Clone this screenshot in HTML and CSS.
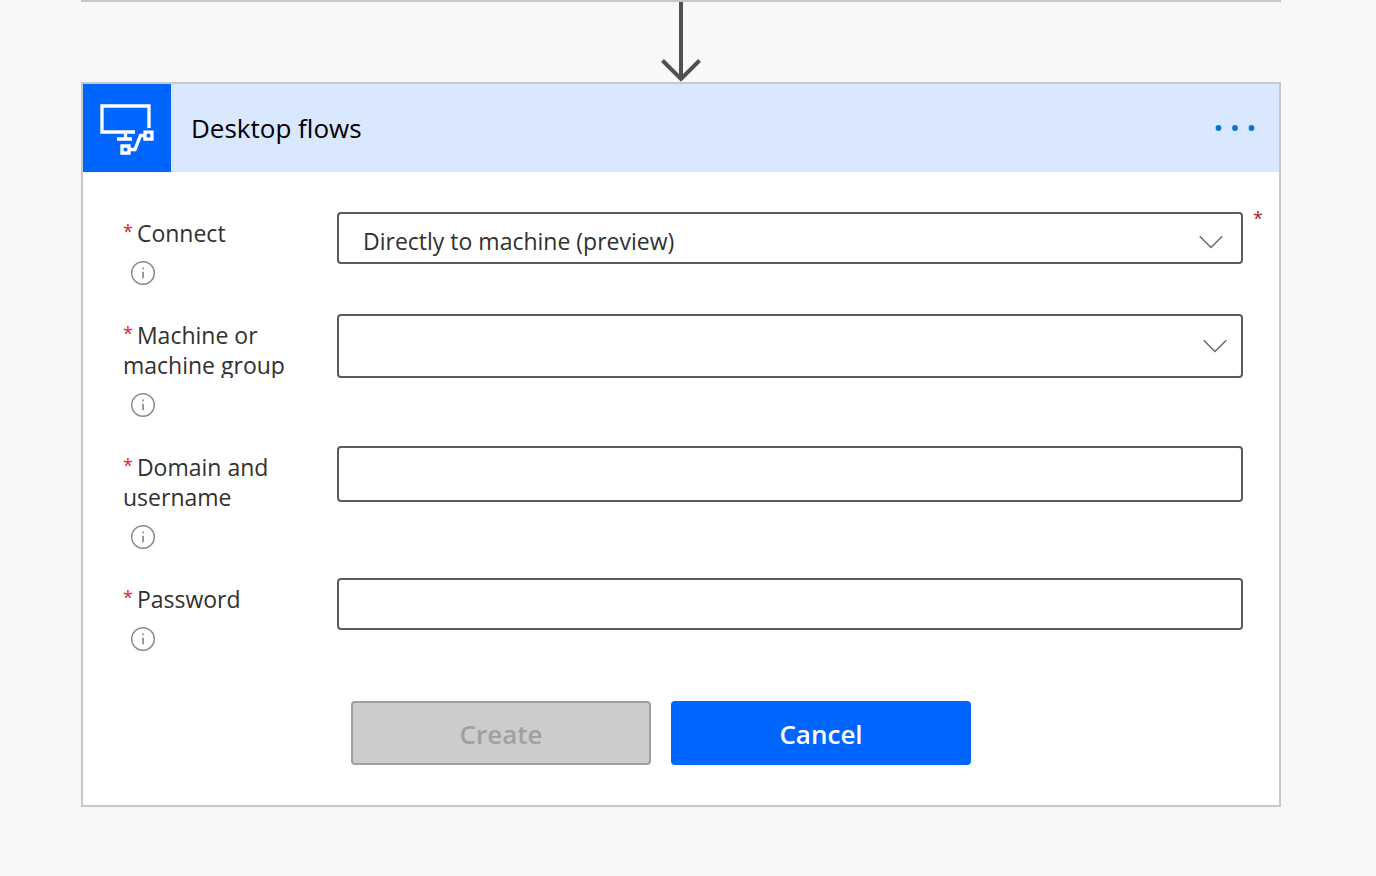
FILE: index.html
```html
<!DOCTYPE html>
<html lang="en">
<head>
<meta charset="utf-8">
<meta name="viewport" content="width=device-width, initial-scale=1">
<title>Desktop flows</title>
<link rel="stylesheet" href="styles.css">
</head>
<body>
<svg class="defs" aria-hidden="true">
  <symbol id="info" viewBox="0 0 24 24">
    <circle cx="12" cy="12" r="11.3" fill="none" stroke="#8a8886" stroke-width="1.4"/>
    <path d="M11.200 6.500h1.700v1.800h-1.700zM11.200 10.800h1.700v6.400h-1.700z" fill="#8a8886"/>
  </symbol>
  <symbol id="chevron" viewBox="0 0 24 14">
    <path d="M.7 1.2 12 12.5 23.3 1.2" fill="none" stroke="#666" stroke-width="1.4"/>
  </symbol>
</svg>
<main class="canvas">
  <div class="previous-step"></div>
  <svg class="connector" viewBox="0 0 40 80" aria-hidden="true">
    <path d="M20 0v77M1.500 58.500 20 77 38.500 58.500" fill="none" stroke="#505050" stroke-width="4"/>
  </svg>
  <section class="card">
    <header class="card-header">
      <div class="logo">
        <svg viewBox="0 0 88 88" aria-hidden="true">
          <g fill="none" stroke="#fff" stroke-width="3.3">
            <path d="M66 44V22H19v26h33"/>
            <path d="M42.500 48v7M34 55h15"/>
            <path d="M62 48.200h7v7h-7z"/>
            <path d="M39 62h7v7h-7z"/>
            <path d="M46 65.500h6l5.500-14h4.500"/>
          </g>
        </svg>
      </div>
      <h1 class="title">Desktop flows</h1>
      <button class="more" type="button" aria-label="More options">
        <svg viewBox="0 0 40 6" aria-hidden="true"><g fill="#0078d7"><circle cx="3.500" cy="3" r="2.900"/><circle cx="20" cy="3" r="2.900"/><circle cx="36.500" cy="3" r="2.900"/></g></svg>
      </button>
    </header>
    <form class="form">
      <div class="row">
        <div class="label-cell">
          <label for="connect"><span class="star">*</span>Connect</label>
          <svg class="info"><use href="#info"/></svg>
        </div>
        <div class="select-box">
          <select id="connect" class="field select-preset"><option>Directly to machine (preview)</option></select>
          <svg class="chevron chevron-preset"><use href="#chevron"/></svg>
        </div>
        <span class="required">*</span>
      </div>
      <div class="row">
        <div class="label-cell">
          <label for="machine"><span class="star">*</span>Machine or machine group</label>
          <svg class="info"><use href="#info"/></svg>
        </div>
        <div class="select-box">
          <select id="machine" class="field select-tall"><option></option></select>
          <svg class="chevron"><use href="#chevron"/></svg>
        </div>
      </div>
      <div class="row">
        <div class="label-cell">
          <label for="username"><span class="star">*</span>Domain and username</label>
          <svg class="info"><use href="#info"/></svg>
        </div>
        <input id="username" class="field input-tall" type="text">
      </div>
      <div class="row">
        <div class="label-cell">
          <label for="password"><span class="star">*</span>Password</label>
          <svg class="info"><use href="#info"/></svg>
        </div>
        <input id="password" class="field" type="password">
      </div>
      <div class="actions">
        <button class="btn btn-create" type="submit" disabled>Create</button>
        <button class="btn btn-cancel" type="button">Cancel</button>
      </div>
    </form>
  </section>
</main>
</body>
</html>
```
FILE: styles.css
```css
* { box-sizing: border-box; }
body {
  margin: 0;
  background: #f8f8f8;
  color: #323130;
  font-family: "Open Sans", "Noto Sans", sans-serif;
  font-size: 23px;
  line-height: 30px;
}
button, input, select { font: inherit; color: inherit; }
.defs { position: absolute; width: 0; height: 0; }
.canvas {
  display: flex;
  flex-direction: column;
  padding: 0 95px 64px 81px;
}
.previous-step { border-bottom: 2px solid #c8c8c8; }
.connector { width: 40px; height: 80px; align-self: center; }
.card { background: #fff; border: 2px solid #c8c8c8; }
.card-header {
  display: flex;
  align-items: center;
  background: #d9e7ff;
}
.logo { width: 88px; height: 88px; background: #06f; }
.logo svg { display: block; }
.title {
  flex: 1;
  margin: 0;
  padding-left: 20px;
  color: #000;
  font-size: 26px;
  font-weight: 400;
}
.more {
  display: flex;
  padding: 12px 24px;
  border: 0;
  background: none;
}
.more svg { width: 40px; height: 6px; }
.form {
  display: flex;
  flex-direction: column;
  gap: 29px;
  padding: 40px 0 40px 40px;
}
.row {
  display: grid;
  grid-template-columns: 214px 1fr 36px;
  align-items: start;
}
.label-cell {
  display: flex;
  flex-direction: column;
  gap: 13px;
  padding: 6px 40px 0 0;
}
.label-cell label { clip-path: inset(0 0 2px 0); }
.star {
  margin-right: 4px;
  color: #e8202a;
  font-size: 18px;
  line-height: 1;
  vertical-align: 4px;
}
.info { width: 24px; height: 24px; margin-left: 8px; }
.field {
  display: block;
  width: 100%;
  height: 52px;
  padding: 0 24px;
  border: 2px solid #5c5c5c;
  border-radius: 4px;
  background: #fff;
  appearance: none;
}
.input-tall { height: 56px; }
.select-tall { height: 64px; }
.select-preset { padding-top: 6px; }
.select-box { position: relative; display: grid; align-items: center; }
.chevron {
  position: absolute;
  right: 16px;
  width: 24px;
  height: 14px;
  pointer-events: none;
}
.chevron-preset { right: 20px; margin-top: 8px; }
.required { padding-left: 10px; color: #a4262c; font-size: 18px; line-height: 12px; }
.actions {
  display: flex;
  gap: 20px;
  padding: 21px 0 0 228px;
}
.btn {
  width: 300px;
  height: 64px;
  padding: 2px 0 0;
  border: 2px solid;
  border-radius: 4px;
  font-size: 26px;
  font-weight: 600;
}
.btn-create { background: #ccc; border-color: #a0a0a0; color: #a0a0a0; }
.btn-cancel { background: #06f; border-color: #06f; color: #fff; }
```
